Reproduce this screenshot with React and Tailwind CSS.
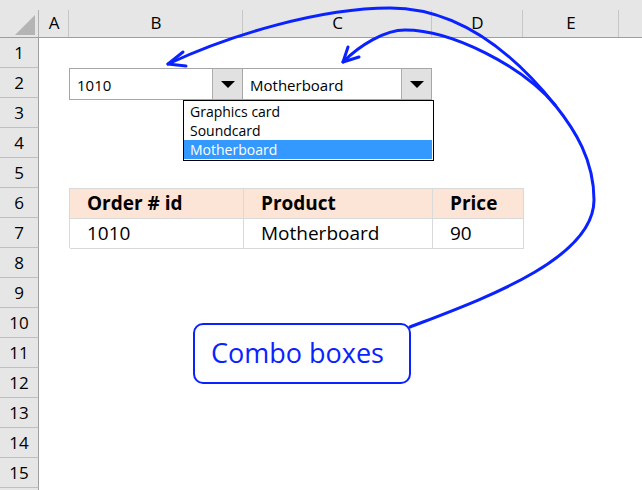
import React from 'react';

const columns = [
  { name: 'A', width: 30 },
  { name: 'B', width: 174 },
  { name: 'C', width: 189 },
  { name: 'D', width: 91 },
  { name: 'E', width: 96 },
  { name: '', width: 23 },
];

const rows = Array.from({ length: 15 }, (_, i) => i + 1);

const font = { fontFamily: '"Open Sans", "Noto Sans", sans-serif' };

const ComboBox = ({ value, className }) => (
  <div className={`flex h-[32px] border border-[#a6a6a6] bg-white ${className}`}>
    <div className="flex-1 flex items-center pl-[7px] pt-[3px] text-[15px] text-black">{value}</div>
    <div className="w-[30px] flex items-center justify-center bg-[#e1e1e1] border-l border-[#adadad]">
      <div className="w-0 h-0 border-l-[7px] border-r-[7px] border-t-[7px] border-l-transparent border-r-transparent border-t-black" />
    </div>
  </div>
);

const Arrows = () => (
  <svg className="absolute inset-0 pointer-events-none" width="642" height="490" viewBox="0 0 642 490" fill="none">
    <g stroke="#0a22ff" strokeWidth="3" strokeLinecap="round" strokeLinejoin="round">
      <path d="M410 327 C480 300 594 260 594 200 C594 160 575 130 555 105 C515 55 460 8 390 8 C320 8 230 35 168 64" />
      <path d="M555 105 C522 66 452 30 405 30 C385 30 360 45 343 62" />
      <path d="M183 52 L168 64 L186 66" />
      <path d="M348 47 L343 62 L359 57" />
    </g>
  </svg>
);

export default function App() {
  return (
    <div className="relative w-[642px] h-[490px] overflow-hidden bg-white" style={font}>
      <div className="grid grid-cols-[39px_30px_174px_189px_91px_96px_1fr] grid-rows-[38px_repeat(15,30px)_1fr] h-full">
        {/* corner */}
        <div className="relative bg-[#e6e6e6] border-b border-[#9e9e9e]">
          <svg className="absolute left-[15px] top-[15px]" width="20" height="20" viewBox="0 0 20 20">
            <polygon points="0,20 20,20 20,0" fill="#b4b4b4" />
          </svg>
          <div className="absolute right-0 top-[10px] bottom-0 w-px bg-[#b0b0b0]" />
        </div>
        {columns.map((c, i) => (
          <div
            key={i}
            className="relative bg-[#e6e6e6] border-b border-[#9e9e9e] flex items-end justify-center pb-[2px] text-[17px] text-black"
          >
            {c.name}
            {c.name && <div className="absolute right-0 top-[10px] bottom-0 w-px bg-[#c6c6c6]" />}
          </div>
        ))}

        {rows.map((r) => (
          <div
            key={r}
            style={{ gridRowStart: r + 1 }}
            className="col-start-1 bg-[#e6e6e6] border-r border-b border-[#bfbfbf] border-r-[#9e9e9e] flex items-center justify-center text-[17px] text-black"
          >
            {r}
          </div>
        ))}
        <div className="col-start-1 row-start-17 bg-[#e6e6e6] border-r border-[#9e9e9e]" />

        {/* combo boxes */}
        <div className="col-start-3 col-span-2 row-start-3 flex self-start">
          <ComboBox value="1010" className="w-[175px]" />
          <ComboBox value="Motherboard" className="w-[191px] -ml-px" />
        </div>

        {/* table */}
        <div className="col-start-3 col-span-3 row-start-7 row-span-2 grid grid-cols-[174px_189px_91px] grid-rows-[30px_30px] border-t border-l border-[#d9d9d9] -mr-px text-[19px] text-black">
          {['Order # id', 'Product', 'Price'].map((h) => (
            <div key={h} className="bg-[#fce4d6] border-r border-b border-[#d9d9d9] flex items-center pl-[17px] font-bold">
              {h}
            </div>
          ))}
          {['1010', 'Motherboard', '90'].map((v) => (
            <div key={v} className="border-r border-b border-[#d9d9d9] flex items-center pl-[17px]">
              {v}
            </div>
          ))}
        </div>

        {/* callout */}
        <div className="col-start-3 col-span-2 row-start-11 row-span-3 self-start ml-[124px] mt-[15px] w-[218px] h-[61px] rounded-[10px] border-2 border-[#0a22ff] bg-white flex items-center pl-[16px] text-[27px] text-[#0a22ff]">
          Combo boxes
        </div>
      </div>

      {/* dropdown list */}
      <div className="absolute left-[183px] top-[100px] w-[251px] h-[61px] border border-black bg-white flex flex-col text-[14px] text-black leading-none">
        <div className="h-[20px] flex items-center pl-[6px] pt-[2px]">Graphics card</div>
        <div className="h-[19px] flex items-center pl-[6px]">Soundcard</div>
        <div className="h-[19px] flex items-center pl-[6px] mr-px bg-[#3399ff] text-white">Motherboard</div>
      </div>

      <Arrows />
    </div>
  );
}
